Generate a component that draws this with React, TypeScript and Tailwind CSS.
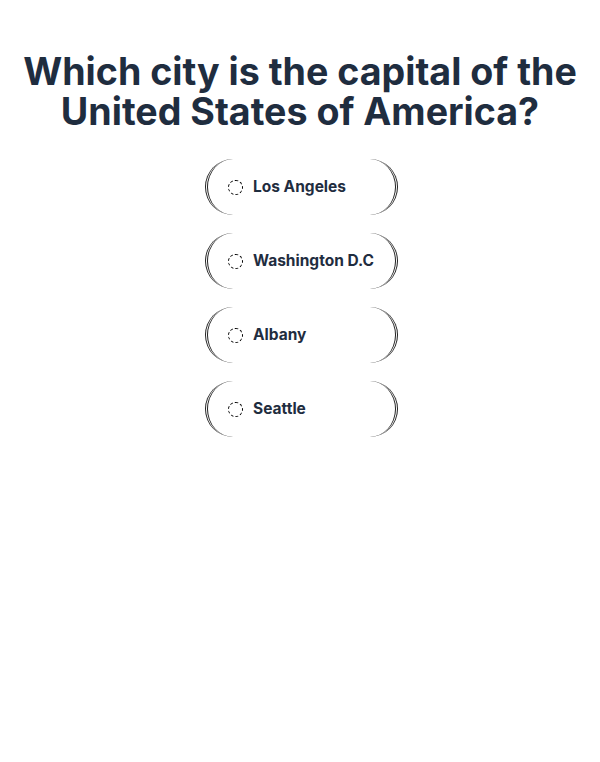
import React from "react";

const options = ["Los Angeles", "Washington D.C", "Albany", "Seattle"];

export default function App() {
  return (
    <div
      className="min-h-[762px] w-[600px] bg-white flex flex-col items-center pt-[52px]"
      style={{ fontFamily: "Inter, 'Noto Sans', sans-serif" }}
    >
      <h1 className="text-[37.6px] leading-[40px] font-bold text-[#1f2d3f] text-center">
        Which city is the capital of the
        <br />
        United States of America?
      </h1>
      <div className="mt-[27px] flex flex-col gap-[18px] ml-[3px]">
        {options.map((o) => (
          <label
            key={o}
            className="w-[193px] h-[56px] rounded-full border-x-[3px] border-y-0 border-double border-[#222] flex items-center pl-[20px] gap-[10px]"
          >
            <span className="w-[15px] h-[15px] rounded-full border border-dashed border-black shrink-0" />
            <span className="text-[15.5px] font-bold text-[#1f2d3f]">{o}</span>
          </label>
        ))}
      </div>
    </div>
  );
}
